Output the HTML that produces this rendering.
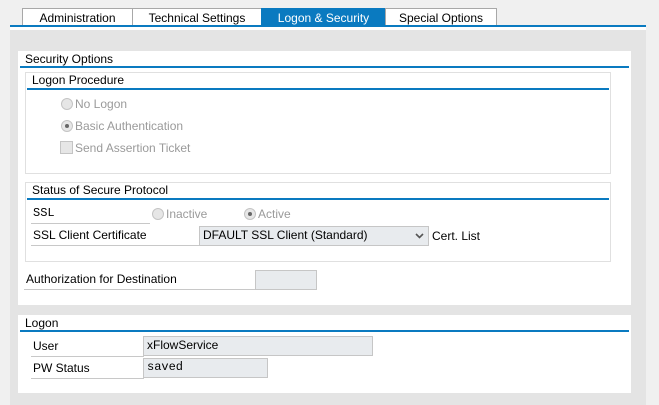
<!DOCTYPE html>
<html><head><meta charset="utf-8"><style>
*{box-sizing:border-box;margin:0;padding:0}
body{width:659px;height:405px;background:#f0f0f0;position:relative;overflow:hidden;font-family:"Liberation Sans",Tahoma,sans-serif;font-size:12px;color:#000}
.a{position:absolute}
.tab{position:absolute;top:8px;height:19px;border:1px solid #a8a8a8;border-bottom:none;background:#fff;text-align:center;line-height:18px}
.lbl{position:absolute;height:19px;line-height:17px;border-bottom:1px solid #c8c8c8;padding-left:6px}
.box{position:absolute;border:1px solid #e0e0e0;background:#fff}
.bl{position:absolute;height:2px;background:#0a7ac0}
.dis{color:#9a9a9a}
.rad{display:inline-block;width:12px;height:12px;border:1px solid #c4c4c4;border-radius:50%;background:#e6e6e6;vertical-align:-2px;margin-right:2px;position:relative}
.rad.on::after{content:"";position:absolute;left:3px;top:3px;width:4px;height:4px;border-radius:50%;background:#666}
.fld{position:absolute;background:#e8ebee;border:1px solid #c6c6c6;padding-left:4px;line-height:17px}
.mono{font-family:"Liberation Mono",monospace;font-size:12px}
</style></head><body>
<div class="a" style="left:10px;top:0;width:636px;height:405px;background:#e4e4e4"></div>
<div class="a" style="left:10px;top:0;width:636px;height:30px;background:#f0f0f0"></div>
<div class="a" style="left:10px;top:27px;width:636px;height:3px;background:#fff"></div>
<div class="tab" style="left:22px;width:111px">Administration</div>
<div class="tab" style="left:132px;width:130px">Technical Settings</div>
<div class="tab" style="left:261px;width:125px;background:#0a7ac0;border-color:#0a7ac0;color:#fff">Logon &amp; Security</div>
<div class="tab" style="left:385px;width:112px">Special Options</div>
<div class="bl" style="left:10px;top:25px;width:636px"></div>

<div class="a" style="left:18px;top:51px;width:613px;height:254px;background:#fff"></div>
<div class="a" style="left:25px;top:52px">Security Options</div>
<div class="bl" style="left:20px;top:66px;width:609px"></div>

<div class="box" style="left:25px;top:72px;width:586px;height:102px"></div>
<div class="a" style="left:32px;top:73px">Logon Procedure</div>
<div class="bl" style="left:27px;top:88px;width:582px"></div>
<div class="a dis" style="left:61px;top:97px"><span class="rad"></span>No Logon</div>
<div class="a dis" style="left:61px;top:119px"><span class="rad on"></span>Basic Authentication</div>
<div class="a dis" style="left:60px;top:141px"><span style="display:inline-block;width:13px;height:13px;border:1px solid #c4c4c4;background:#e6e6e6;vertical-align:-2px;margin-right:2px"></span>Send Assertion Ticket</div>

<div class="box" style="left:25px;top:182px;width:586px;height:80px"></div>
<div class="a" style="left:32px;top:183px">Status of Secure Protocol</div>
<div class="bl" style="left:27px;top:198px;width:582px"></div>
<div class="lbl mono" style="left:31px;top:205px;width:119px;padding-left:2px">SSL</div>
<div class="a dis" style="left:152px;top:207px"><span class="rad"></span>Inactive</div>
<div class="a dis" style="left:244px;top:207px"><span class="rad on"></span>Active</div>
<div class="lbl" style="left:31px;top:227px;width:168px;padding-left:2px">SSL Client Certificate</div>
<div class="fld" style="left:199px;top:226px;width:230px;height:20px;padding-left:3px">DFAULT SSL Client (Standard)<svg class="a" style="right:4px;top:6px" width="9" height="6"><path d="M1 1l3.5 3.5L8 1" stroke="#555" stroke-width="1.6" fill="none"/></svg></div>
<div class="a" style="left:432px;top:229px">Cert. List</div>

<div class="lbl" style="left:24px;top:271px;width:232px;padding-left:2px">Authorization for Destination</div>
<div class="fld" style="left:255px;top:270px;width:62px;height:20px"></div>

<div class="a" style="left:18px;top:315px;width:613px;height:78px;background:#fff"></div>
<div class="a" style="left:25px;top:316px">Logon</div>
<div class="bl" style="left:20px;top:330px;width:609px"></div>
<div class="lbl" style="left:31px;top:338px;width:113px;padding-left:2px">User</div>
<div class="fld" style="left:143px;top:336px;width:230px;height:20px;padding-left:3px">xFlowService</div>
<div class="lbl" style="left:31px;top:360px;width:113px;padding-left:2px">PW Status</div>
<div class="fld mono" style="left:143px;top:358px;width:125px;height:20px;padding-left:3px">saved</div>
</body></html>
